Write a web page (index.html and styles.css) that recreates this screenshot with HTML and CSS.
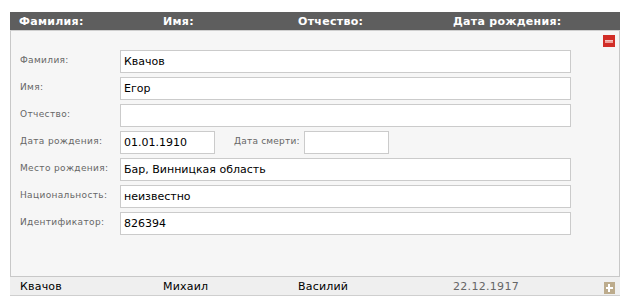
FILE: index.html
```html
<!DOCTYPE html>
<html lang="ru">
<head>
<meta charset="utf-8">
<link rel="stylesheet" href="styles.css">
</head>
<body>
<div class="table">
  <div class="head">
    <span>Фамилия:</span>
    <span>Имя:</span>
    <span>Отчество:</span>
    <span>Дата рождения:</span>
  </div>
  <div class="panel">
    <div class="tools">
      <span class="btn-minus"><span class="bar"></span></span>
    </div>
    <div class="form">
      <div class="row"><label>Фамилия:</label><div class="inp wide">Квачов</div></div>
      <div class="row"><label>Имя:</label><div class="inp wide">Егор</div></div>
      <div class="row"><label>Отчество:</label><div class="inp wide"></div></div>
      <div class="row"><label>Дата рождения:</label><div class="inp date">01.01.1910</div><label class="sub">Дата смерти:</label><div class="inp death"></div></div>
      <div class="row"><label>Место рождения:</label><div class="inp wide">Бар, Винницкая область</div></div>
      <div class="row"><label>Национальность:</label><div class="inp wide">неизвестно</div></div>
      <div class="row"><label>Идентификатор:</label><div class="inp wide">826394</div></div>
    </div>
  </div>
  <div class="item">
    <span>Квачов</span>
    <span>Михаил</span>
    <span>Василий</span>
    <span class="dt">22.12.1917</span>
    <span class="btn-plus"><span class="h"></span><span class="v"></span></span>
  </div>
</div>
</body>
</html>
```
FILE: styles.css
```css
html, body { margin: 0; padding: 0; background: #fff; }
body { font-family: "DejaVu Sans", Verdana, sans-serif; padding: 12px 6px 0 10px; }
.table { width: 610px; }
.head {
  height: 18px;
  box-sizing: content-box;
  background: #5e5e5e;
  border-bottom: 1px solid #cfcfcf;
  display: grid;
  grid-template-columns: 144px 135px 155px 1fr;
  padding-left: 9px;
  align-items: center;
  color: #fff;
  font-weight: bold;
  font-size: 11px;
  line-height: 20px;
}
.head span { letter-spacing: 0.3px; }
.panel {
  background: #f6f6f6;
  border-left: 1px solid #c8c8c8;
  border-right: 1px solid #c8c8c8;
  border-bottom: 1px solid #c8c8c8;
  padding: 4px 4px 41px 8px;
}
.tools { display: flex; justify-content: flex-end; height: 12px; margin-bottom: 3px; }
.btn-minus {
  width: 12px; height: 12px; background: #d12d27;
  display: flex; align-items: center; justify-content: center;
}
.btn-minus .bar { width: 8px; height: 3px; background: #f0a09a; border-top: 1px solid #f6c6c2; box-sizing: border-box; }
.form { display: flex; flex-direction: column; gap: 4px; }
.row { display: flex; align-items: center; height: 23px; }
.row label {
  width: 100px;
  font-size: 9px;
  color: #666;
  letter-spacing: 0.35px;
  padding-left: 1px;
  margin-top: -3px;
}
.row label.sub { width: auto; margin-left: 19px; margin-right: 4px; padding-left: 0; letter-spacing: 0.2px; }
.inp {
  height: 23px;
  box-sizing: border-box;
  background: #fff;
  border: 1px solid #cbcbcb;
  font-size: 11px;
  color: #000;
  line-height: 21px;
  padding-left: 3px;
}
.inp.wide { width: 451px; }
.inp.date { width: 95px; }
.inp.death { width: 85px; }
.item {
  height: 18px;
  background: #efefef;
  border-bottom: 1px solid #cfcfcf;
  display: grid;
  grid-template-columns: 143px 135px 155px 1fr 11px;
  padding-left: 10px;
  padding-right: 5px;
  align-items: center;
  font-size: 11px;
  color: #000;
  letter-spacing: 0.2px;
}
.item .dt { color: #666; letter-spacing: 0.3px; }
.btn-plus {
  width: 11px; height: 12px; background: #bcab8c;
  position: relative; align-self: end; margin-bottom: 1px;
}
.btn-plus .h { position: absolute; left: 2px; top: 5px; width: 7px; height: 2px; background: #fff; }
.btn-plus .v { position: absolute; left: 4px; top: 2px; width: 2px; height: 8px; background: #fff; }
```
